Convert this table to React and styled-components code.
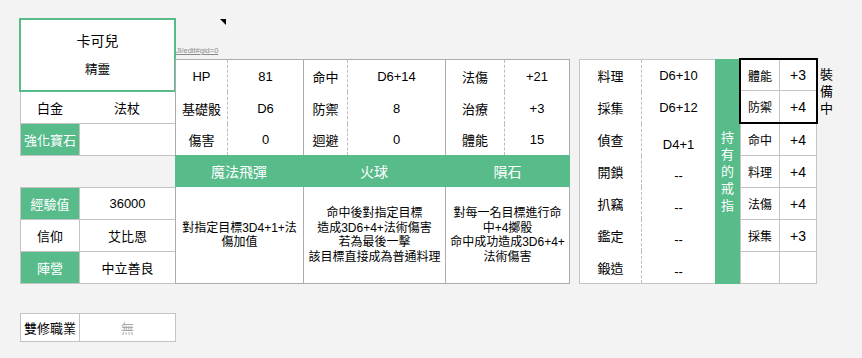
import styled, { createGlobalStyle } from 'styled-components'

const GREEN = '#57bb8a'
const LINE = '#c4c4c4'
const RULE = '#acacac'
const DOTS = '#bdbdbd'

const GlobalStyle = createGlobalStyle`
  * { box-sizing: border-box; }
  body {
    margin: 0;
    background: #f3f3f3;
    color: #000;
    font-family: 'Liberation Sans', 'Noto Sans CJK TC', sans-serif;
  }
`

const stats = [
  { width: 51, rows: [['HP', '81'], ['基礎骰', 'D6'], ['傷害', '0']] },
  { width: 43, rows: [['命中', 'D6+14'], ['防禦', '8'], ['迴避', '0']] },
  { width: 58, rows: [['法傷', '+21'], ['治療', '+3'], ['體能', '15']] },
]

const spells = [
  { name: '魔法飛彈', lines: ['對指定目標3D4+1+法', '傷加值'] },
  { name: '火球', lines: ['命中後對指定目標', '造成3D6+4+法術傷害', '若為最後一擊', '該目標直接成為普通料理'] },
  { name: '隕石', lines: ['對每一名目標進行命', '中+4擲骰', '命中成功造成3D6+4+', '法術傷害'] },
]

const checks = [
  ['料理', 'D6+10'],
  ['採集', 'D6+12'],
  ['偵查', 'D4+1', true],
  ['開鎖', '--', true],
  ['扒竊', '--', true],
  ['鑑定', '--', true],
  ['鍛造', '--', true],
]

const equipped = [['體能', '+3'], ['防禦', '+4']]
const carried = [['命中', '+4'], ['料理', '+4'], ['法傷', '+4'], ['採集', '+3'], ['', '']]

function App() {
  return (
    <Page>
      <GlobalStyle />
      <LeftColumn>
        <NameCard>
          <Name>卡可兒</Name>
          <Race>精靈</Race>
        </NameCard>
        <SideTable>
          <Row>
            <Cell>白金</Cell>
            <Cell>法杖</Cell>
          </Row>
          <Row>
            <Cell $green>強化寶石</Cell>
            <Cell $divider />
          </Row>
        </SideTable>
        <SideTable $gap={31} $top>
          <Row>
            <Cell $green>經驗值</Cell>
            <Cell $divider>36000</Cell>
          </Row>
          <Row>
            <Cell>信仰</Cell>
            <Cell $divider>艾比恩</Cell>
          </Row>
          <Row>
            <Cell $green>陣營</Cell>
            <Cell $divider>中立善良</Cell>
          </Row>
        </SideTable>
        <SideTable $gap={29} $top>
          <Row $height={28}>
            <Cell>雙修職業</Cell>
            <Cell $divider $muted>無</Cell>
          </Row>
        </SideTable>
      </LeftColumn>

      <MiddleColumn>
        <TopNote>
          <Marker />
          <SheetLink>Jl/edit#gid=0</SheetLink>
        </TopNote>
        <StatTable>
          {stats.map((group, i) => (
            <StatGroup key={i} $label={group.width} $last={i === stats.length - 1}>
              {group.rows.map(([label, value]) => [
                <StatLabel key={label}>{label}</StatLabel>,
                <StatValue key={label + 'v'}>{value}</StatValue>,
              ])}
            </StatGroup>
          ))}
        </StatTable>
        <SpellTable>
          {spells.map(spell => (
            <SpellHead key={spell.name}>{spell.name}</SpellHead>
          ))}
          {spells.map((spell, i) => (
            <SpellDesc key={spell.name} $last={i === spells.length - 1}>
              <div>
                {spell.lines.map(line => (
                  <div key={line}>{line}</div>
                ))}
              </div>
            </SpellDesc>
          ))}
        </SpellTable>
      </MiddleColumn>

      <RightSection>
        <CheckTable>
          {checks.map(([label, value, low]) => [
            <CheckLabel key={label}>{label}</CheckLabel>,
            <CheckValue key={label + 'v'} $bottom={low}>{value}</CheckValue>,
          ])}
        </CheckTable>
        <RingBand>
          <VerticalText>持有的戒指</VerticalText>
        </RingBand>
        <RingColumn>
          <EquippedBox>
            {equipped.map(([label, value], i) => (
              <RingRow key={label} $boxed $height={31} $line={i === 0}>
                <RingLabel>{label}</RingLabel>
                <RingValue>{value}</RingValue>
              </RingRow>
            ))}
          </EquippedBox>
          {carried.map(([label, value], i) => (
            <RingRow key={i}>
              <RingLabel>{label}</RingLabel>
              <RingValue>{value}</RingValue>
            </RingRow>
          ))}
        </RingColumn>
        <EquippedNote>
          <VerticalText>裝備中</VerticalText>
        </EquippedNote>
      </RightSection>
    </Page>
  )
}

const Page = styled.main`
  display: flex;
  align-items: flex-start;
  width: 862px;
  height: 358px;
  padding: 18px 0 0 20px;
  overflow: hidden;
`

const LeftColumn = styled.div`
  display: flex;
  flex-direction: column;
  width: 156px;
  flex-shrink: 0;
`

const NameCard = styled.div`
  display: flex;
  flex-direction: column;
  align-items: center;
  gap: 9px;
  width: 157px;
  height: 74px;
  margin-left: -1px;
  padding-top: 11px;
  border: 2px solid ${GREEN};
  background: #fff;
`

const Name = styled.div`
  font-size: 14px;
  line-height: 20px;
`

const Race = styled.div`
  font-size: 12.5px;
  line-height: 20px;
`

const SideTable = styled.div`
  margin-top: ${p => p.$gap || 0}px;
  border-left: 1px solid ${LINE};
  border-right: 1px solid ${LINE};
  border-top: ${p => (p.$top ? `1px solid ${LINE}` : 'none')};
  background: #fff;
`

const Row = styled.div`
  display: grid;
  grid-template-columns: 58px 1fr;
  height: ${p => p.$height || 32}px;
  border-bottom: 1px solid ${LINE};
`

const Cell = styled.div`
  display: flex;
  align-items: center;
  justify-content: center;
  font-size: 13px;
  white-space: nowrap;
  background: ${p => (p.$green ? GREEN : '#fff')};
  color: ${p => (p.$green ? '#fff' : p.$muted ? '#a8a8a8' : '#000')};
  border-left: ${p => (p.$divider ? `1px solid ${LINE}` : 'none')};
`

const MiddleColumn = styled.div`
  display: flex;
  flex-direction: column;
  width: 395px;
  margin-left: -1px;
  flex-shrink: 0;
`

const TopNote = styled.div`
  display: flex;
  flex-direction: column;
  height: 41px;
`

const Marker = styled.div`
  width: 0;
  height: 0;
  margin: 1px 0 0 45px;
  border-top: 6px solid #000;
  border-left: 6px solid transparent;
`

const SheetLink = styled.div`
  margin: auto 0 4px 1px;
  font-size: 7.5px;
  line-height: 9px;
  color: #8a8a8a;
  text-decoration: underline;
  white-space: nowrap;
`

const StatTable = styled.div`
  display: grid;
  grid-template-columns: 128px 142px 125px;
  border-top: 1px solid ${RULE};
  background: #fff;
`

const StatGroup = styled.div`
  display: grid;
  grid-template-columns: ${p => p.$label}px 1fr;
  grid-template-rows: 32px 32px 31px;
  border-left: 1px solid ${RULE};
  border-right: ${p => (p.$last ? `1px solid ${RULE}` : 'none')};
`

const StatLabel = styled.div`
  display: flex;
  align-items: center;
  justify-content: center;
  font-size: 13px;
  white-space: nowrap;
`

const StatValue = styled(StatLabel)`
  border-left: 1px dashed ${DOTS};
`

const SpellTable = styled.div`
  display: grid;
  grid-template-columns: 128px 142px 125px;
  grid-template-rows: 32px 97px;
`

const SpellHead = styled.div`
  display: flex;
  align-items: center;
  justify-content: center;
  background: ${GREEN};
  color: #fff;
  font-size: 14px;
`

const SpellDesc = styled.div`
  display: flex;
  align-items: center;
  justify-content: center;
  background: #fff;
  border-left: 1px solid ${RULE};
  border-bottom: 1px solid ${RULE};
  border-right: ${p => (p.$last ? `1px solid ${RULE}` : 'none')};
  font-size: 12px;
  line-height: 14.5px;
  text-align: center;
  white-space: nowrap;
`

const RightSection = styled.div`
  display: flex;
  align-items: flex-start;
  margin: 41px 0 0 9px;
`

const CheckTable = styled.div`
  display: grid;
  grid-template-columns: 61px 1fr;
  grid-template-rows: repeat(7, 1fr);
  width: 136px;
  height: 225px;
  border: 1px solid ${LINE};
  border-right: none;
  background: #fff;
`

const CheckLabel = styled.div`
  display: flex;
  align-items: center;
  justify-content: center;
  font-size: 13px;
`

const CheckValue = styled.div`
  display: flex;
  align-items: ${p => (p.$bottom ? 'flex-end' : 'center')};
  justify-content: center;
  padding-bottom: ${p => (p.$bottom ? 3 : 0)}px;
  border-left: 1px dashed ${DOTS};
  font-size: 13px;
  line-height: 16px;
`

const RingBand = styled.div`
  display: flex;
  align-items: center;
  justify-content: center;
  width: 25px;
  height: 225px;
  background: ${GREEN};
  color: #fff;
`

const VerticalText = styled.div`
  width: 1em;
  font-size: 13px;
  line-height: 17px;
  text-align: center;
  word-break: break-all;
`

const RingColumn = styled.div`
  display: flex;
  flex-direction: column;
  width: 77px;
  margin-top: -1px;
`

const EquippedBox = styled.div`
  height: 66px;
  margin: 0 -1px;
  border: 2px solid #000;
  background: #fff;
`

const RingRow = styled.div`
  display: grid;
  grid-template-columns: 38px 1fr;
  height: ${p => p.$height || 32}px;
  background: #fff;
  border-bottom: ${p => (!p.$boxed || p.$line ? `1px solid ${LINE}` : 'none')};
  border-left: ${p => (p.$boxed ? 'none' : `1px solid ${LINE}`)};
  border-right: ${p => (p.$boxed ? 'none' : `1px solid ${LINE}`)};
`

const RingLabel = styled.div`
  display: flex;
  align-items: center;
  justify-content: center;
  font-size: 12px;
`

const RingValue = styled.div`
  display: flex;
  align-items: center;
  justify-content: center;
  border-left: 1px solid ${LINE};
  font-size: 14px;
`

const EquippedNote = styled.div`
  margin: 7px 0 0 3px;
`

export default App
